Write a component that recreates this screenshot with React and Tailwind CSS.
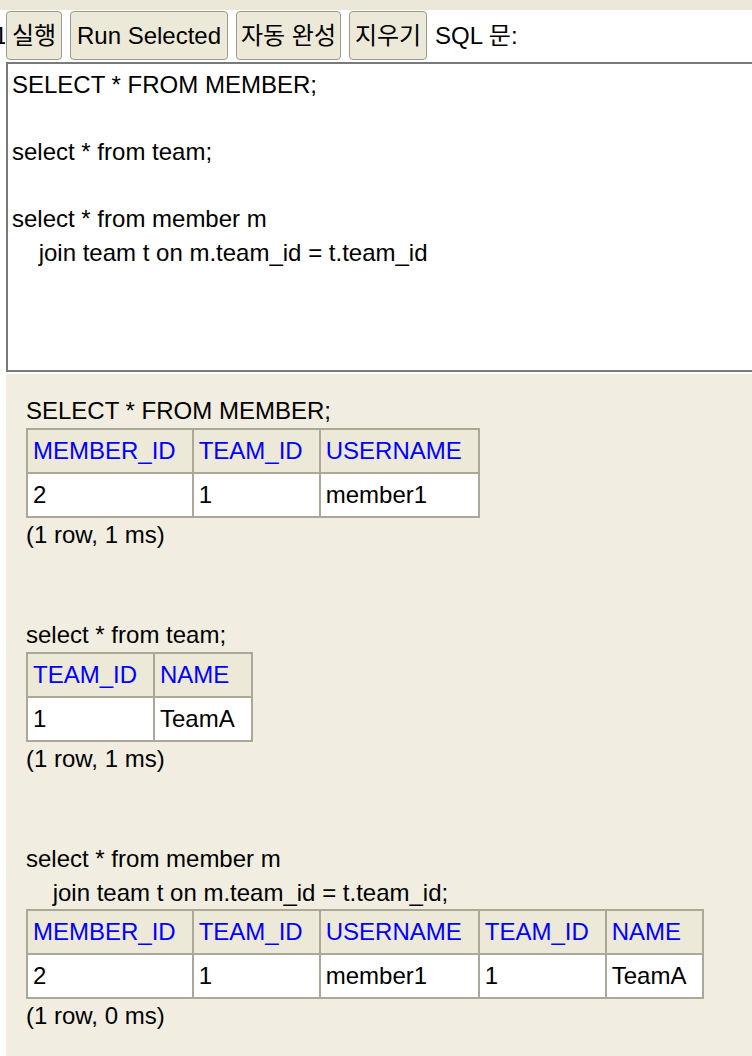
const font = { fontFamily: '"Liberation Sans", Arial, "Noto Sans CJK KR", sans-serif' };

const results = [
    {
        sql: ['SELECT * FROM MEMBER;'],
        cols: ['MEMBER_ID', 'TEAM_ID', 'USERNAME'],
        rows: [['2', '1', 'member1']],
        info: '(1 row, 1 ms)',
    },
    {
        sql: ['select * from team;'],
        cols: ['TEAM_ID', 'NAME'],
        rows: [['1', 'TeamA']],
        info: '(1 row, 1 ms)',
    },
    {
        sql: ['select * from member m', '    join team t on m.team_id = t.team_id;'],
        cols: ['MEMBER_ID', 'TEAM_ID', 'USERNAME', 'TEAM_ID', 'NAME'],
        rows: [['2', '1', 'member1', '1', 'TeamA']],
        info: '(1 row, 0 ms)',
    },
];

function ToolButton({ label, w }) {
    return (
        <button className={`${w} h-[49px] shrink-0 rounded-[4px] border border-[#9d9a8d] bg-[#ece9d8] text-[24px] leading-none text-black`}>
            {label}
        </button>
    );
}

function ResultTable({ cols, rows }) {
    return (
        <table className="border-collapse border-2 border-[#aca899] text-[24px] leading-[34px]">
            <thead>
                <tr className="bg-[#ece9d8]">
                    {cols.map((c, i) => (
                        <th key={i} className="border-2 border-[#aca899] pl-[5px] pr-[16px] py-[4px] text-left font-normal text-[#0000ff]">{c}</th>
                    ))}
                </tr>
            </thead>
            <tbody>
                {rows.map((r, i) => (
                    <tr key={i} className="bg-white">
                        {r.map((v, j) => (
                            <td key={j} className="border-2 border-[#aca899] pl-[5px] pr-[16px] py-[4px] text-black">{v}</td>
                        ))}
                    </tr>
                ))}
            </tbody>
        </table>
    );
}

export default function App() {
    return (
        <div className="w-[752px] h-[1056px] overflow-hidden bg-white text-black" style={font}>
            <div className="h-[10px] bg-[#ebe8da]" />
            <div className="ml-[6px]">
                <div className="flex items-center gap-[8px] h-[52px] pb-[1px]">
                    <span className="-ml-[6px] -mr-[7px] w-[5px] overflow-hidden text-[24px] leading-none whitespace-nowrap">
                        <span className="inline-block -ml-[6px]">1</span>
                    </span>
                    <ToolButton label="실행" w="w-[56px]" />
                    <ToolButton label="Run Selected" w="w-[158px]" />
                    <ToolButton label="자동 완성" w="w-[105px]" />
                    <ToolButton label="지우기" w="w-[78px]" />
                    <span className="text-[24px] leading-none">SQL 문:</span>
                </div>
                <div className="w-[760px] h-[310px] border-2 border-r-0 border-[#7a7a7a] px-[4px] pt-[4px] text-[24px] leading-[33.5px] whitespace-pre">
                    {'SELECT * FROM MEMBER;\n\nselect * from team;\n\nselect * from member m\n    join team t on m.team_id = t.team_id'}
                </div>
                <div className="mt-[2px] h-[700px] bg-[#f1eee1] pl-[20px] pt-[20px] text-[24px] leading-[33.5px]">
                    {results.map((res, i) => (
                        <div key={i} className={i > 0 ? 'mt-[67px]' : ''}>
                            {res.sql.map((l, k) => (
                                <div key={k} className="whitespace-pre">{l}</div>
                            ))}
                            <ResultTable cols={res.cols} rows={res.rows} />
                            <div>{res.info}</div>
                        </div>
                    ))}
                </div>
            </div>
        </div>
    );
}
